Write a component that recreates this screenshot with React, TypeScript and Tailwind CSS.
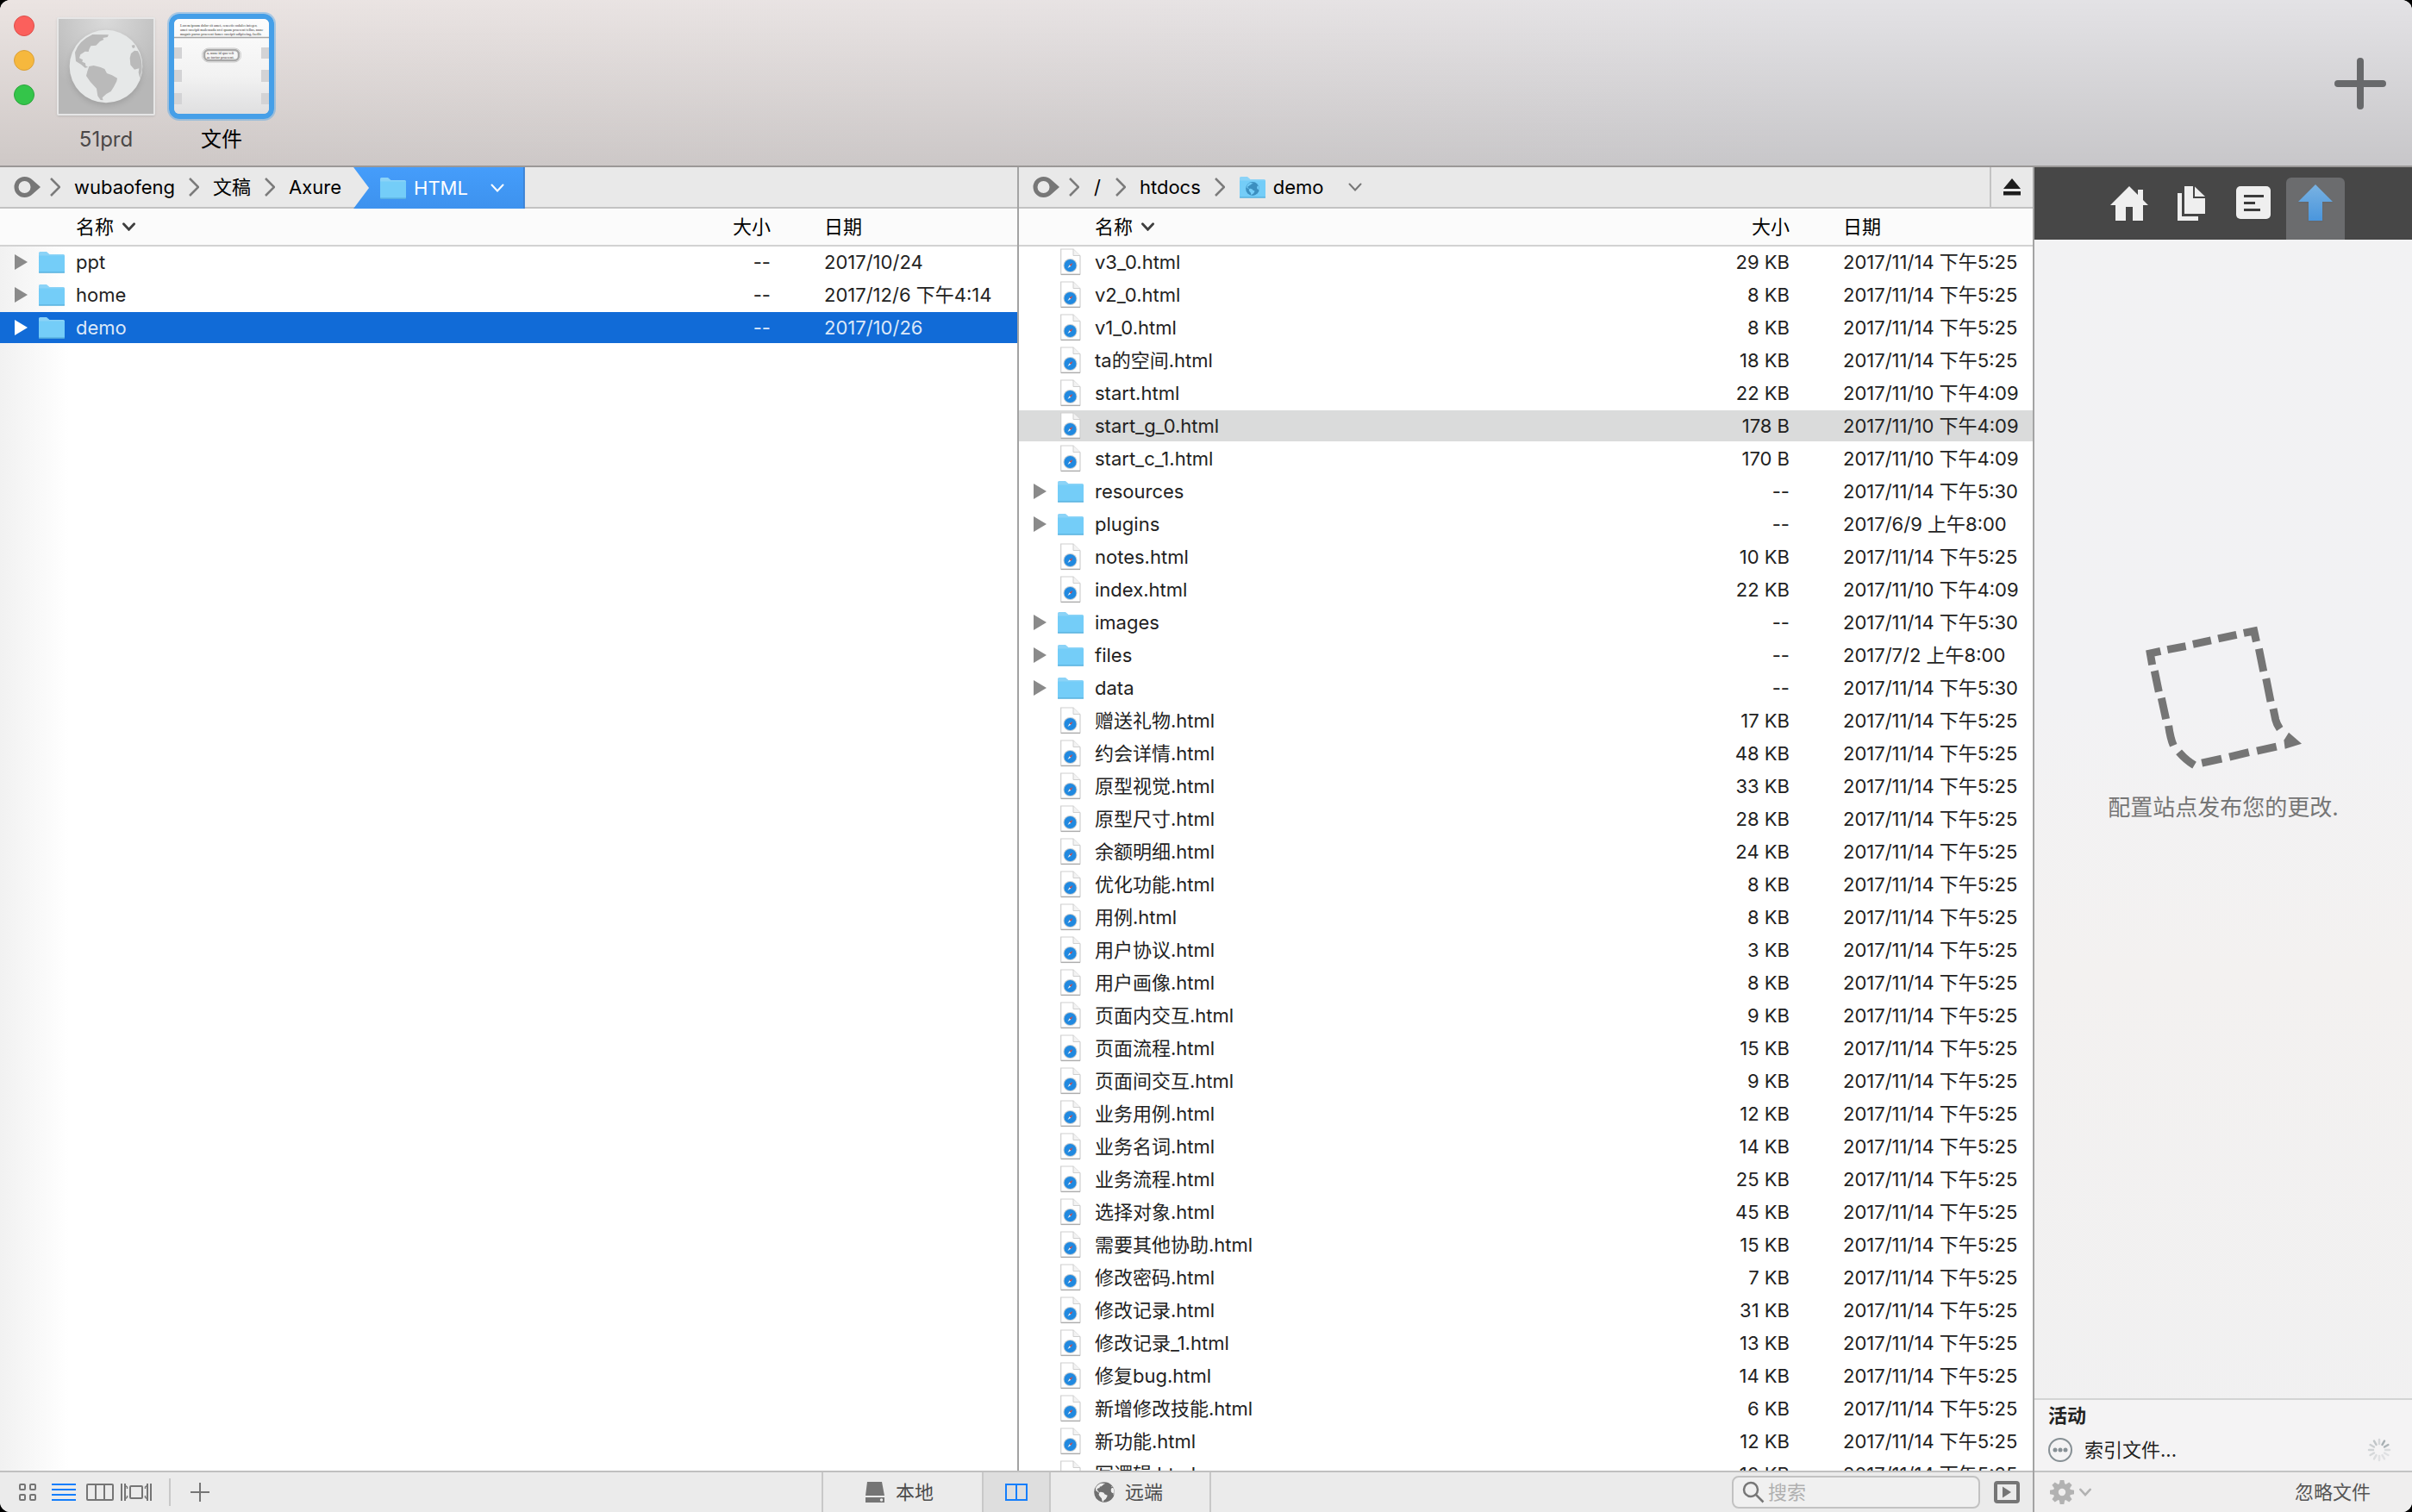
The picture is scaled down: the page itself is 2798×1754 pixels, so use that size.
import { useState, type ReactNode } from "react";

type Entry = { name: string; size: string; date: string; folder?: boolean };

const LOCAL: Entry[] = [
  { name: "ppt", size: "--", date: "2017/10/24", folder: true },
  { name: "home", size: "--", date: "2017/12/6 下午4:14", folder: true },
  { name: "demo", size: "--", date: "2017/10/26", folder: true },
];

const T525 = "2017/11/14 下午5:25";
const T530 = "2017/11/14 下午5:30";
const T409 = "2017/11/10 下午4:09";

const REMOTE: Entry[] = [
  { name: "v3_0.html", size: "29 KB", date: T525 },
  { name: "v2_0.html", size: "8 KB", date: T525 },
  { name: "v1_0.html", size: "8 KB", date: T525 },
  { name: "ta的空间.html", size: "18 KB", date: T525 },
  { name: "start.html", size: "22 KB", date: T409 },
  { name: "start_g_0.html", size: "178 B", date: T409 },
  { name: "start_c_1.html", size: "170 B", date: T409 },
  { name: "resources", size: "--", date: T530, folder: true },
  { name: "plugins", size: "--", date: "2017/6/9 上午8:00", folder: true },
  { name: "notes.html", size: "10 KB", date: T525 },
  { name: "index.html", size: "22 KB", date: T409 },
  { name: "images", size: "--", date: T530, folder: true },
  { name: "files", size: "--", date: "2017/7/2 上午8:00", folder: true },
  { name: "data", size: "--", date: T530, folder: true },
  { name: "赠送礼物.html", size: "17 KB", date: T525 },
  { name: "约会详情.html", size: "48 KB", date: T525 },
  { name: "原型视觉.html", size: "33 KB", date: T525 },
  { name: "原型尺寸.html", size: "28 KB", date: T525 },
  { name: "余额明细.html", size: "24 KB", date: T525 },
  { name: "优化功能.html", size: "8 KB", date: T525 },
  { name: "用例.html", size: "8 KB", date: T525 },
  { name: "用户协议.html", size: "3 KB", date: T525 },
  { name: "用户画像.html", size: "8 KB", date: T525 },
  { name: "页面内交互.html", size: "9 KB", date: T525 },
  { name: "页面流程.html", size: "15 KB", date: T525 },
  { name: "页面间交互.html", size: "9 KB", date: T525 },
  { name: "业务用例.html", size: "12 KB", date: T525 },
  { name: "业务名词.html", size: "14 KB", date: T525 },
  { name: "业务流程.html", size: "25 KB", date: T525 },
  { name: "选择对象.html", size: "45 KB", date: T525 },
  { name: "需要其他协助.html", size: "15 KB", date: T525 },
  { name: "修改密码.html", size: "7 KB", date: T525 },
  { name: "修改记录.html", size: "31 KB", date: T525 },
  { name: "修改记录_1.html", size: "13 KB", date: T525 },
  { name: "修复bug.html", size: "14 KB", date: T525 },
  { name: "新增修改技能.html", size: "6 KB", date: T525 },
  { name: "新功能.html", size: "12 KB", date: T525 },
  { name: "写逻辑.html", size: "10 KB", date: T525 },
];

function FolderIcon({ globe = false }: { globe?: boolean }) {
  return (
    <svg className="w-8 h-7 shrink-0" viewBox="0 0 32 28">
      <path d="M1 3.5Q1 2 2.5 2H10l3.5 3H29.5Q31 5 31 6.500V8H1Z" fill="#8bd3f7" />
      <path d="M1 6.500H31V25.500Q31 26.500 30 26.500H2Q1 26.500 1 25.500Z" fill="#74cdf8" />
      <path d="M1 26H31" stroke="#54acd9" strokeWidth="1.200" />
      {globe && (
        <svg x="8" y="8" width="16" height="16" viewBox="90 100 258 258">
          <Continents ocean="#3c8fc0" land="#74cdf8" />
        </svg>
      )}
    </svg>
  );
}

function Continents({ ocean, land }: { ocean: string; land: string }) {
  return (
    <>
      <circle cx="219" cy="229" r="127" fill={ocean} />
      <path
        d="M111 180Q124 140 172 118L228 119L224 127L208 130L211 136L198 142L184 156L166 158L160 170L158 178L146 177L130 188L126 200L138 206L136 213L147 218L148 227L157 232L146 234L132 222L114 211Z"
        fill={land}
      />
      <path
        d="M160 229L176 226L200 232L214 238L222 253L240 260L258 270L256 281L246 300L236 316L220 325L206 338L209 347L200 346L190 332L186 306L164 282L150 262L154 246Z"
        fill={land}
      />
      <path d="M318 174L330 176Q345 202 344 240L337 270L332 250L334 236L318 240L304 224L302 200L306 184Z" fill={land} />
      <path d="M308 156L318 154L320 163L312 166Z" fill={land} />
    </>
  );
}

function PageIcon() {
  return (
    <svg className="w-6 h-8 shrink-0" viewBox="0 0 24 32">
      <path d="M.7 1H15L23 9V30H.7Z" fill="#fff" stroke="#cfcfcf" strokeWidth="1.200" />
      <path d="M.7 30.500H23" stroke="#adadad" strokeWidth="1.200" />
      <path d="M15 1V8.500H23" fill="#f3f3f3" stroke="#cfcfcf" strokeWidth="1" />
      <circle cx="11.500" cy="20" r="8" fill="#c3cbd1" />
      <circle cx="11.500" cy="20" r="7" fill="#2089e0" />
      <path d="M8.500 23L10.700 19.200L12.300 20.800Z" fill="#e6f1fa" />
      <path d="M14.500 17L10.700 19.200L12.300 20.800Z" fill="#d8483f" />
    </svg>
  );
}

function RingIcon() {
  return (
    <svg className="w-8 h-6 shrink-0" viewBox="0 0 32 24">
      <path
        fillRule="evenodd"
        d="M12.500 0Q18 0 22 4L31 12L22 20Q18 24 12.500 24A12 12 0 0 1 12.500 0ZM12.500 5A7 7 0 1 0 12.500 19A7 7 0 1 0 12.500 5Z"
        fill="#777"
      />
    </svg>
  );
}

function Crumb() {
  return (
    <svg className="w-3 h-6 shrink-0" viewBox="0 0 12 24" fill="none" stroke="#7b7b7b" strokeWidth="2.500">
      <path d="M1 2L11 12L1 22" />
    </svg>
  );
}

function Down({ className }: { className: string }) {
  return (
    <svg className={className} viewBox="0 0 16 10" fill="none" stroke="currentColor" strokeLinecap="round">
      <path d="M1.500 1.500L8 8.500L14.500 1.500" />
    </svg>
  );
}

function Bar({ children }: { children: ReactNode }) {
  return (
    <div className="h-12 shrink-0 border-b-2 border-[#c3c3c3] bg-[#e9e9e9] flex items-stretch text-[22px] text-black">
      {children}
    </div>
  );
}

function FileTable({ label, rows, picked, tone, dateCol }: {
  label: string;
  rows: Entry[];
  picked: string;
  tone: "active" | "idle";
  dateCol: string;
}) {
  const [selected, setSelected] = useState(picked);
  const head = "h-[44px] p-0 border-b-2 border-[#d2d2d2] font-normal text-left";
  return (
    <div className="flex-1 min-h-0 overflow-hidden">
      <table aria-label={label} className="w-full table-fixed border-separate border-spacing-0 text-[22px] leading-7 whitespace-nowrap">
        <thead className="text-black bg-[#fbfbfb]">
          <tr>
            <th className={head}>
              <button className="flex items-center gap-[10px] pl-[88px]">
                名称
                <Down className="w-[15px] h-[10px] text-[#3f3f3f] stroke-3" />
              </button>
            </th>
            <th className={head + " w-[120px] text-right"}>大小</th>
            <th className={head + " pl-[62px] " + dateCol}>日期</th>
          </tr>
        </thead>
        <tbody>
          {rows.map((r) => {
            const on = r.name === selected;
            const bg = !on ? "text-[#222]" : tone === "active" ? "bg-[#116bd7] text-[#dbe8f9]" : "bg-[#dadbdb] text-[#222]";
            const cell = "h-[38px] p-0 border-b-2 border-transparent bg-clip-padding " + bg;
            return (
              <tr key={r.name} onClick={() => setSelected(r.name)}>
                <td className={cell}>
                  <div className="flex items-center gap-3 pl-4">
                    <svg className="w-4 h-5 shrink-0" viewBox="0 0 16 20">
                      {r.folder && <path d="M1 1L16 10L1 19Z" fill={on && tone === "active" ? "#fff" : "#8a8a8a"} />}
                    </svg>
                    <span className="w-8 flex justify-center">{r.folder ? <FolderIcon /> : <PageIcon />}</span>
                    {r.name}
                  </div>
                </td>
                <td className={cell + " text-right"}>{r.size}</td>
                <td className={cell + " pl-[62px]"}>{r.date}</td>
              </tr>
            );
          })}
        </tbody>
      </table>
    </div>
  );
}

function Header() {
  return (
    <header className="h-[194px] shrink-0 border-b-2 border-[#9b9897] flex items-start px-4 bg-[linear-gradient(to_bottom,rgba(0,0,0,0),rgba(0,0,0,0.12)),linear-gradient(to_right,#ebe4e2,#e8e3e3_40%,#e3e2e5_75%)]">
      <div className="flex flex-col gap-4 pt-[18px]">
        <button aria-label="关闭" className="size-6 rounded-full bg-[#fb605c] border border-[#dd4e49]" />
        <button aria-label="最小化" className="size-6 rounded-full bg-[#f6b83d] border border-[#d9a03a]" />
        <button aria-label="缩放" className="size-6 rounded-full bg-[#34c54a] border border-[#2ca53c]" />
      </div>
      <nav className="flex gap-4 pl-[26px] pt-4 text-2xl leading-8">
        <button className="flex flex-col items-center gap-2 text-[#4b4848]">
          <span className="h-[122px] flex items-center">
            <span className="size-[114px] border-2 border-[#e6e6e6] rounded-xs shadow-sm bg-[radial-gradient(circle_at_50%_0%,#dadada,#b7b7b7_70%)] flex items-center justify-center">
              <svg className="size-[86px] drop-shadow-md" viewBox="90 100 258 258">
                <Continents ocean="#e6e8e8" land="#bababa" />
              </svg>
            </span>
          </span>
          51prd
        </button>
        <button className="flex flex-col items-center gap-2 text-black">
          <span className="size-[122px] rounded-xl border-6 border-[#459fe8] ring-2 ring-[#459fe8]/40 overflow-hidden">
            <svg className="size-[110px]" viewBox="0 0 110 110">
              <defs>
                <linearGradient id="paper" x1="0" y1="0" x2="0" y2="1">
                  <stop offset="0" stopColor="#fdfdfd" />
                  <stop offset=".6" stopColor="#f2f2f2" />
                  <stop offset="1" stopColor="#dfdfe0" />
                </linearGradient>
              </defs>
              <rect width="110" height="110" fill="url(#paper)" />
              <g fontFamily="Liberation Serif" fontWeight="bold" fontSize="4" fill="#777">
                <text x="7" y="9">Lorem ipsum dolor sit amet, senectis sodales integer,</text>
                <text x="7" y="14">amet suscipit malesuada orci quam praesent tellus, nunc</text>
                <text x="7" y="19">magnis purus praesent fames suscipit adipiscing, facilis</text>
              </g>
              <path d="M0 21.500H110" stroke="#a5a5a5" strokeWidth="1.500" />
              <g fill="#d3d3d5">
                <path d="M0 33H9V46H0ZM0 59H9V73H0ZM0 86H9V99H0ZM101 33H110V46H101ZM101 59H110V73H101ZM101 86H110V99H101Z" />
              </g>
              <rect x="35" y="36" width="40" height="12" rx="5" fill="#f6f6f6" stroke="#a8a8a8" strokeWidth="2.500" />
              <rect x="32.500" y="34" width="45" height="16" rx="7.500" fill="none" stroke="#c9c9c9" strokeWidth="1" />
              <g fontFamily="Liberation Serif" fontWeight="bold" fontSize="4" fill="#777">
                <text x="38" y="41">a, nunc id quo veli</text>
                <text x="38" y="46">ac tortor praesent.</text>
              </g>
            </svg>
          </span>
          文件
        </button>
      </nav>
      <button aria-label="新建站点" className="ml-auto mt-[67px] mr-[14px]">
        <svg className="size-[60px]" viewBox="0 0 60 60" stroke="#68696b" strokeWidth="8" strokeLinecap="round">
          <path d="M30 4V56M4 30H56" />
        </svg>
      </button>
    </header>
  );
}

function LocalPane() {
  return (
    <section className="w-[calc(50%+3px)] shrink-0 flex flex-col border-r-2 border-[#a3a3a3] bg-[linear-gradient(to_right,#f1f1f1,#fff_80px)]">
      <Bar>
        <nav className="flex items-center gap-4 pl-4">
          <div className="flex items-center gap-[10px]"><RingIcon /><Crumb /></div>
          <a href="#wubaofeng">wubaofeng</a>
          <Crumb />
          <a href="#docs">文稿</a>
          <Crumb />
          <a href="#axure">Axure</a>
        </nav>
        <a href="#html" className="ml-[14px] -mb-[2px] pl-[30px] pr-[22px] flex items-center gap-2 text-white bg-linear-to-b from-[#459dfb] to-[#3d92ee] border-r-2 border-[#3b83d6] [clip-path:polygon(0_0,100%_0,100%_100%,0_100%,18px_50%)]">
          <FolderIcon />
          HTML
          <Down className="w-4 h-[10px] ml-[18px] stroke-2" />
        </a>
      </Bar>
      <FileTable label="本地文件" rows={LOCAL} picked="demo" tone="active" dateCol="w-[286px]" />
    </section>
  );
}

function RemotePane() {
  return (
    <section className="flex-1 min-w-0 flex flex-col bg-white">
      <Bar>
        <nav className="flex items-center gap-4 pl-4">
          <div className="flex items-center gap-[10px]"><RingIcon /><Crumb /></div>
          <a href="#root" className="px-px">/</a>
          <Crumb />
          <a href="#htdocs">htdocs</a>
          <Crumb />
          <a href="#demo" className="flex items-center gap-2">
            <FolderIcon globe />
            demo
            <Down className="w-4 h-[10px] ml-5 text-[#777] stroke-2" />
          </a>
        </nav>
        <button aria-label="断开连接" className="ml-auto w-[50px] border-l-2 border-[#c3c3c3] flex items-center justify-center">
          <svg className="w-5 h-5" viewBox="0 0 20 20" fill="#1d1d1d">
            <path d="M10 0L20 12H0ZM0 15H20V19.500H0Z" />
          </svg>
        </button>
      </Bar>
      <FileTable label="远端文件" rows={REMOTE} picked="start_g_0.html" tone="idle" dateCol="w-[282px]" />
    </section>
  );
}

function Footer() {
  return (
    <footer className="h-12 shrink-0 border-t-2 border-[#c0c0c0] bg-[#ebebeb] grid grid-cols-[1fr_auto_1fr] items-stretch text-[22px] text-[#4b4b4b]">
      <div className="flex items-center pl-[22px] text-[#757575]">
        <button aria-label="图标视图">
          <svg className="w-5 h-5" viewBox="0 0 20 20" fill="none" stroke="currentColor" strokeWidth="2">
            <rect x="1" y="1" width="6" height="6" rx="1" />
            <rect x="13" y="1" width="6" height="6" rx="1" />
            <rect x="1" y="13" width="6" height="6" rx="1" />
            <rect x="13" y="13" width="6" height="6" rx="1" />
          </svg>
        </button>
        <button aria-label="列表视图" className="ml-[18px] text-[#157efb]">
          <svg className="w-7 h-5" viewBox="0 0 28 20" stroke="currentColor" strokeWidth="2">
            <path d="M0 1H28M0 7H28M0 13H28M0 19H28" />
          </svg>
        </button>
        <button aria-label="分栏视图" className="ml-3">
          <svg className="w-8 h-5" viewBox="0 0 32 20" fill="none" stroke="currentColor" strokeWidth="2">
            <rect x="1" y="1" width="30" height="18" rx="1" />
            <path d="M11 1V19M21 1V19" />
          </svg>
        </button>
        <button aria-label="封面视图" className="ml-2">
          <svg className="w-9 h-5" viewBox="0 0 36 20" fill="none" stroke="currentColor" strokeWidth="2">
            <path d="M1 0V20M35 0V20M31 0V20M5 0V20" />
            <path d="M5 2L7.500 4V6M5 18L7.500 16V14M31 2L28.500 4V6M31 18L28.500 16V14" strokeWidth="1.500" />
            <rect x="11" y="3" width="14" height="14" rx="1" />
          </svg>
        </button>
        <span className="ml-5 w-[2px] h-8 bg-[#c8c8c8]" />
        <button aria-label="新建" className="ml-[23px]">
          <svg className="w-[22px] h-[22px]" viewBox="0 0 22 22" stroke="currentColor" strokeWidth="2">
            <path d="M11 0V22M0 11H22" />
          </svg>
        </button>
      </div>
      <div className="flex items-stretch border-x-2 border-[#c8c8c8] divide-x-2 divide-[#c8c8c8]">
        <button className="w-[186px] pr-2 flex items-center justify-center gap-3">
          <svg className="w-6 h-6" viewBox="0 0 24 24" fill="#757575">
            <path d="M3 0H20L23 16H1ZM1 18H23V24H1Z" />
            <circle cx="19.500" cy="21" r="1.700" fill="#ebebeb" />
          </svg>
          本地
        </button>
        <button aria-label="双栏" className="w-[78px] bg-[#dedede] flex items-center justify-center">
          <svg className="w-[26px] h-5" viewBox="0 0 26 20" fill="none" stroke="#157efb" strokeWidth="2">
            <path d="M1 1H25V19H1ZM13 1V19" />
          </svg>
        </button>
        <button className="w-[184px] pr-1 flex items-center justify-center gap-3">
          <svg className="w-6 h-6" viewBox="90 100 258 258">
            <Continents ocean="#6f6f6f" land="#efefef" />
          </svg>
          远端
        </button>
      </div>
      <div className="flex items-center justify-end gap-4 pr-[15px]">
        <label className="w-[288px] h-[38px] px-[10px] border-2 border-[#c2c2c2] rounded-lg bg-[#f0f0f0] flex items-center gap-1">
          <svg className="w-[26px] h-[26px] shrink-0" viewBox="0 0 26 26" fill="none" stroke="#777" strokeWidth="2.500">
            <circle cx="10" cy="10" r="8" />
            <path d="M15.500 15.500L24.500 24.500" />
          </svg>
          <input type="text" aria-label="搜索" placeholder="搜索" className="min-w-0 flex-1 bg-transparent outline-none placeholder:text-[#b0b0b0]" />
        </label>
        <button aria-label="预览">
          <svg className="w-[30px] h-[26px]" viewBox="0 0 30 26">
            <rect x="2" y="2" width="26" height="22" rx="2" fill="none" stroke="#757575" strokeWidth="4" />
            <path d="M10 6.500L20 13L10 19.500Z" fill="#757575" />
          </svg>
        </button>
      </div>
    </footer>
  );
}

const RAYS = [0.3, 0.75, 0.7, 0.25, 0.2, 0.2, 0.2, 0.25, 0.3, 0.35, 0.4, 0.5];

function Sidebar() {
  const tab = "w-[68px] h-[72px] pt-[8px] flex justify-center rounded-t-md";
  return (
    <aside className="w-[440px] shrink-0 border-l-2 border-[#a3a3a3] flex flex-col bg-[linear-gradient(to_bottom,#f2f2f3,#f2f2f4_40%,#f3f1f0_60%,#f0f0f1)]">
      <nav className="h-[84px] shrink-0 pr-[2px] bg-[#474747] flex items-end justify-center gap-1">
        <button aria-label="主页" className={tab}>
          <svg className="w-11 h-[44px] drop-shadow-xs" viewBox="0 0 44 44" fill="#efefef">
            <path d="M22 2L32 12V6H38V18L44 24H38V42H26V26H18V42H6V24H0Z" />
          </svg>
        </button>
        <button aria-label="文件" className={tab}>
          <svg className="w-8 h-[44px] drop-shadow-xs" viewBox="0 0 32 44" fill="#efefef">
            <path d="M0 10H5V37H24V42H0Z" />
            <path d="M8 2H18V16H32V34H8Z" />
            <path d="M20 2.500L32 14H20Z" />
          </svg>
        </button>
        <button aria-label="备注" className={tab}>
          <svg className="w-10 h-[44px] drop-shadow-xs" viewBox="0 0 40 44">
            <rect y="2" width="40" height="38" rx="5" fill="#efefef" />
            <path d="M9 13.500H32M9 21.500H22M9 29.500H28" stroke="#3c3c3c" strokeWidth="3" />
          </svg>
        </button>
        <button aria-label="发布" className={tab + " bg-[#6b6c6e]"}>
          <svg className="w-10 h-[44px] drop-shadow-xs" viewBox="0 0 40 44">
            <defs>
              <linearGradient id="up" x1="0" y1="0" x2="0" y2="1">
                <stop offset="0" stopColor="#79b2e2" />
                <stop offset="1" stopColor="#4a96dd" />
              </linearGradient>
            </defs>
            <path d="M20 0L40 20H28V42H12V20H0Z" fill="url(#up)" />
          </svg>
        </button>
      </nav>

      <div className="flex-1 flex flex-col items-center justify-center gap-7 pb-[222px] text-[#757575]">
        <svg className="w-[181px] h-[167px]" viewBox="444 140 544 500" fill="none" stroke="currentColor" strokeWidth="27">
          <path d="M496 227L460 235L467 275M520 222L584 210M609 203L672 190M697 184L761 170M786 164L822 157L830 194" />
          <path d="M839 219L855 298M864 323L880 403M889 428L897 466Q901 482 912 498" />
          <path d="M900 560L832 575M804 580L736 596M709 602L640 617M614 625Q585 608 560 579" />
          <path d="M541 556Q530 530 524 487M515 464L499 391M490 369L475 296" />
          <path d="M943 511L988 550L930 568L926 538Z" fill="currentColor" stroke="none" />
        </svg>
        <p className="text-[26px] leading-8">配置站点发布您的更改.</p>
      </div>

      <div className="h-[84px] shrink-0 border-t-2 border-[#d3d4d4] bg-[#f4f3f4] pl-4 pr-6 text-[22px] text-[#222]">
        <h2 className="font-bold h-[38px] leading-9">活动</h2>
        <div className="h-10 flex items-center gap-[14px]">
          <svg className="w-7 h-7" viewBox="0 0 28 28">
            <circle cx="14" cy="14" r="13" fill="none" stroke="#879095" strokeWidth="2" />
            <path d="M8 14h.01M14 14h.01M20 14h.01" stroke="#879095" strokeWidth="5" strokeLinecap="round" />
          </svg>
          索引文件...
          <svg className="w-7 h-7 ml-auto" viewBox="-14 -14 28 28" stroke="#8f9a9e" strokeWidth="2.500" strokeLinecap="round">
            {RAYS.map((o, i) => (
              <path key={i} d="M0 -7V-12" opacity={o} transform={`rotate(${i * 30})`} />
            ))}
          </svg>
        </div>
      </div>
      <div className="h-12 shrink-0 border-t-2 border-[#c3c4c4] bg-[#efeeee] pl-[18px] pr-12 flex items-center justify-between text-[22px] text-[#555]">
        <button aria-label="设置" className="flex items-center gap-[6px] text-[#b2b2b2]">
          <svg className="w-7 h-7" viewBox="-14 -14 28 28">
            <circle r="7.200" fill="none" stroke="currentColor" strokeWidth="6" />
            {[0, 45, 90, 135, 180, 225, 270, 315].map((a) => (
              <path key={a} d="M-2.300 -14H2.300L3.300 -9H-3.300Z" fill="currentColor" transform={`rotate(${a})`} />
            ))}
          </svg>
          <Down className="w-[14px] h-[10px] stroke-3" />
        </button>
        <button>忽略文件</button>
      </div>
    </aside>
  );
}

export default function App() {
  return (
    <div className="h-screen bg-black [font-family:Inter,'Noto_Sans_CJK_SC',sans-serif] [font-optical-sizing:none]">
      <div className="h-full rounded-xl overflow-hidden flex flex-col bg-white">
        <Header />
        <main className="flex-1 min-h-0 flex">
          <div className="flex-1 min-w-0 flex flex-col">
            <div className="flex-1 min-h-0 flex">
              <LocalPane />
              <RemotePane />
            </div>
            <Footer />
          </div>
          <Sidebar />
        </main>
      </div>
    </div>
  );
}
